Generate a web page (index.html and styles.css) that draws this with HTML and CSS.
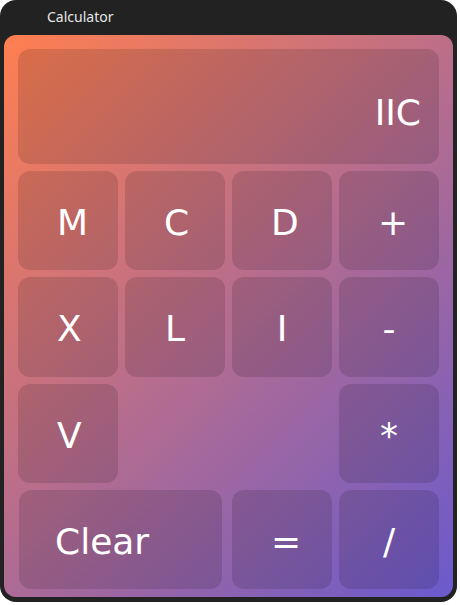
FILE: index.html
```html
<!DOCTYPE html>
<html lang="en">
<head>
<meta charset="utf-8">
<title>Calculator</title>
<link rel="stylesheet" href="styles.css">
</head>
<body>
<div class="window">
  <div class="titlebar">Calculator</div>
  <div class="panel">
    <div class="display">IIC</div>
    <div class="key"><span>M</span></div>
    <div class="key"><span>C</span></div>
    <div class="key"><span>D</span></div>
    <div class="key"><span>+</span></div>
    <div class="key"><span>X</span></div>
    <div class="key"><span>L</span></div>
    <div class="key"><span>I</span></div>
    <div class="key"><span>-</span></div>
    <div class="key"><span>V</span></div>
    <div class="key op-star"><span>*</span></div>
    <div class="key clear"><span>Clear</span></div>
    <div class="key shift"><span>=</span></div>
    <div class="key shift"><span>/</span></div>
  </div>
</div>
</body>
</html>
```
FILE: styles.css
```css
html, body {
  margin: 0;
  padding: 0;
  background: #ffffff;
}

.window {
  width: 457px;
  height: 602px;
  background: #222222;
  border-radius: 16px;
  overflow: hidden;
  display: flex;
  flex-direction: column;
}

.titlebar {
  height: 35px;
  box-sizing: border-box;
  padding: 0 0 2px 47px;
  display: flex;
  align-items: center;
  font-family: "Noto Sans", "DejaVu Sans", sans-serif;
  font-size: 14px;
  color: #e6e6e6;
  flex-shrink: 0;
}

.panel {
  margin: 0 4px;
  height: 562px;
  box-sizing: border-box;
  border-radius: 12px;
  background: linear-gradient(135deg, #ff7f50 0%, #6a5acd 100%);
  padding: 14px 14px 8px;
  display: grid;
  grid-template-columns: repeat(4, 100px);
  grid-template-rows: 115px repeat(4, 1fr);
  column-gap: 7px;
  row-gap: 7px;
  font-family: "DejaVu Sans", sans-serif;
  color: #ffffff;
}

.display {
  grid-column: 1 / 5;
  background: rgba(0, 0, 0, 0.13);
  border-radius: 12px;
  display: flex;
  align-items: flex-end;
  justify-content: flex-end;
  padding: 0 18px 31px;
  font-size: 36px;
}

.key {
  background: rgba(0, 0, 0, 0.13);
  border-radius: 12px;
  display: flex;
  align-items: center;
  box-sizing: border-box;
  padding: 4px 39px 0;
  font-size: 36px;
}

.key span {
  flex: 1 1 0;
  min-width: 0;
  text-align: center;
  white-space: nowrap;
}

.op-star {
  grid-column: 4;
}

.clear {
  grid-column: 1 / 3;
  margin: 0 3px 0 1px;
  padding-left: 36px;
}

.clear span {
  text-align: left;
}
```
